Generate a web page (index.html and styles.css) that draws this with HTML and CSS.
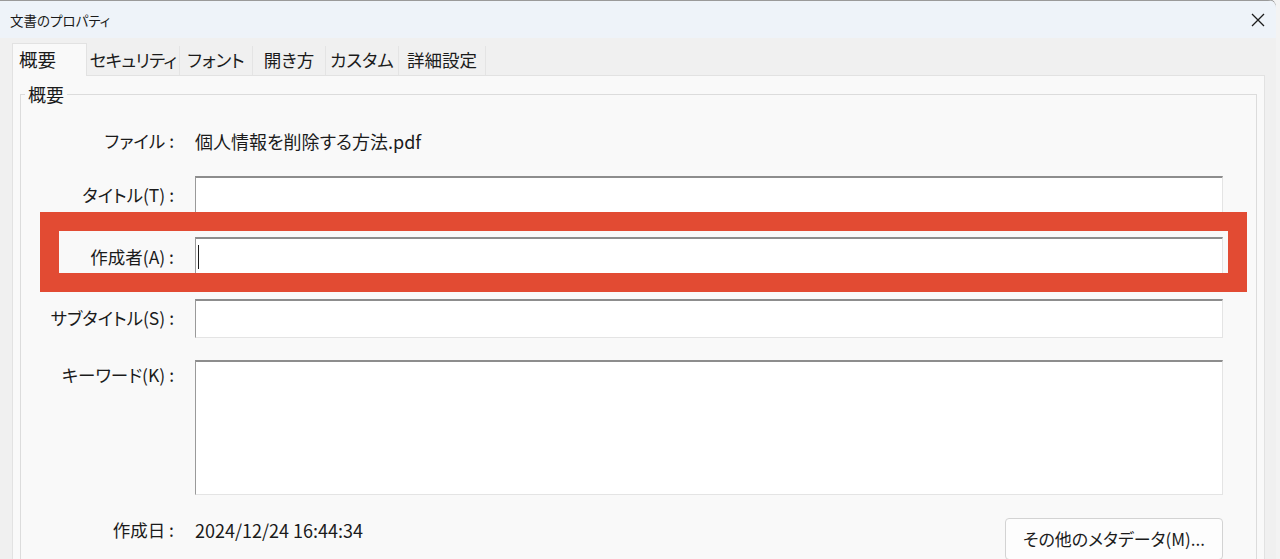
FILE: index.html
```html
<!DOCTYPE html>
<html lang="ja">
<head>
<meta charset="utf-8">
<title>文書のプロパティ</title>
<link rel="stylesheet" href="styles.css">
</head>
<body>
<div class="window">
  <header class="titlebar">
    <span class="title">文書のプロパティ</span>
    <svg class="close" width="14" height="14" viewBox="0 0 14 14" aria-label="閉じる">
      <path d="M1 1 L13 13 M13 1 L1 13" stroke="#1c1c1c" stroke-width="1.3" fill="none"/>
    </svg>
  </header>

  <nav class="tabs">
    <div class="tab selected">概要</div>
    <div class="tab w93 tight">セキュリティ</div>
    <div class="tab w73">フォント</div>
    <div class="tab w73">開き方</div>
    <div class="tab w73">カスタム</div>
    <div class="tab w87">詳細設定</div>
  </nav>

  <section class="panel">
    <fieldset class="group">
      <legend class="legend">概要</legend>
      <div class="form">
        <div class="label">ファイル :</div>
        <div class="value">個人情報を削除する方法.pdf</div>

        <div class="label">タイトル(T) :</div>
        <div class="input"></div>

        <div class="label">作成者(A) :</div>
        <div class="input"><span class="caret"></span></div>

        <div class="label">サブタイトル(S) :</div>
        <div class="input"></div>

        <div class="label top kw">キーワード(K) :</div>
        <div class="input tall"></div>

        <div class="label top">作成日 :</div>
        <div class="daterow">
          <span class="value">2024/12/24 16:44:34</span>
          <button class="button" type="button">その他のメタデータ(M)...</button>
        </div>

        <div class="highlight"></div>
      </div>
    </fieldset>
  </section>
</div>
</body>
</html>
```

FILE: styles.css
```css
html, body {
  margin: 0;
  padding: 0;
  height: 100%;
  overflow: hidden;
}
body {
  background: #f3f3f3;
  font-family: "Noto Sans CJK JP", "Noto Sans", sans-serif;
  font-feature-settings: "palt";
  color: #1b1b1b;
}
.window {
  width: 1276px;
  height: 100%;
  background: #f0f0f0;
  border-top-right-radius: 8px;
  box-shadow: 0 -1px 0 #8a8a8a;
  overflow: hidden;
}
.titlebar {
  height: 38px;
  box-sizing: border-box;
  border-top: 1px solid #9a9a9a;
  background: #eef3f9;
  display: flex;
  align-items: center;
  justify-content: space-between;
  padding: 0 11px 0 10px;
}
.title {
  font-size: 13.5px;
  line-height: 20px;
  color: #1a1a1a;
}
.close {
  display: block;
  margin-top: 1px;
}

.tabs {
  display: flex;
  align-items: flex-end;
  height: 32px;
  margin-top: 5px;
  padding-left: 12px;
  position: relative;
  z-index: 1;
}
.tab {
  height: 29px;
  box-sizing: border-box;
  background: #f0f0f0;
  border-right: 1px solid #e4e4e4;
  font-size: 17.5px;
  line-height: 28px;
  text-align: center;
  white-space: nowrap;
}
.tab.tight {
  letter-spacing: -0.6px;
}
.tab.selected {
  height: 33px;
  width: 75px;
  margin-bottom: -1px;
  background: #f9f9f9;
  border: 1px solid #e2e2e2;
  border-bottom: none;
  text-align: left;
  padding-left: 6px;
  line-height: 30px;
  font-size: 18.5px;
}
.w93 { width: 93px; }
.w73 { width: 73px; }
.w87 { width: 87px; }

.panel {
  width: 1253px;
  box-sizing: border-box;
  margin-left: 12px;
  height: 500px;
  background: #f9f9f9;
  border: 1px solid #e2e2e2;
  padding: 6px 7px 0 7px;
}
.group {
  margin: 0;
  padding: 0 33px 0 0;
  border: 1px solid #dcdcdc;
  min-width: 0;
}
.legend {
  margin-left: 4px;
  padding: 0 3px;
  font-size: 18px;
  line-height: 24px;
  height: 24px;
}
.form {
  position: relative;
  display: grid;
  grid-template-columns: 155px 1fr;
  column-gap: 19px;
  row-gap: 22.5px;
  padding-top: 23px;
  align-items: center;
}
.label {
  font-size: 17.5px;
  line-height: 24px;
  text-align: right;
  white-space: nowrap;
  color: #1b1b1b;
  padding-right: 2px;
}
.label.top {
  align-self: start;
}
.label.kw {
  margin-top: 3px;
}
.value {
  font-size: 18px;
  line-height: 24px;
  white-space: nowrap;
}
.input {
  height: 39px;
  box-sizing: border-box;
  background: #ffffff;
  border-top: 2px solid #8d8d8d;
  border-left: 1px solid #9a9a9a;
  border-right: 1px solid #e4e4e4;
  border-bottom: 1px solid #e4e4e4;
  display: flex;
  align-items: center;
  padding-left: 2px;
}
.input.tall {
  height: 135px;
}
.caret {
  width: 1px;
  height: 24px;
  background: #1b1b1b;
}
.daterow {
  display: flex;
  align-items: flex-start;
  justify-content: space-between;
  height: 41px;
}
.button {
  width: 218px;
  height: 42px;
  box-sizing: border-box;
  background: #fdfdfd;
  border: 1px solid #d3d3d3;
  border-radius: 4px;
  font-family: inherit;
  font-feature-settings: "palt";
  font-size: 17px;
  color: #1b1b1b;
  padding: 0;
  line-height: 40px;
}
.highlight {
  position: absolute;
  left: 19px;
  top: 106px;
  width: 1207px;
  height: 80px;
  box-sizing: border-box;
  border: 19px solid #e24b33;
  pointer-events: none;
}
```
